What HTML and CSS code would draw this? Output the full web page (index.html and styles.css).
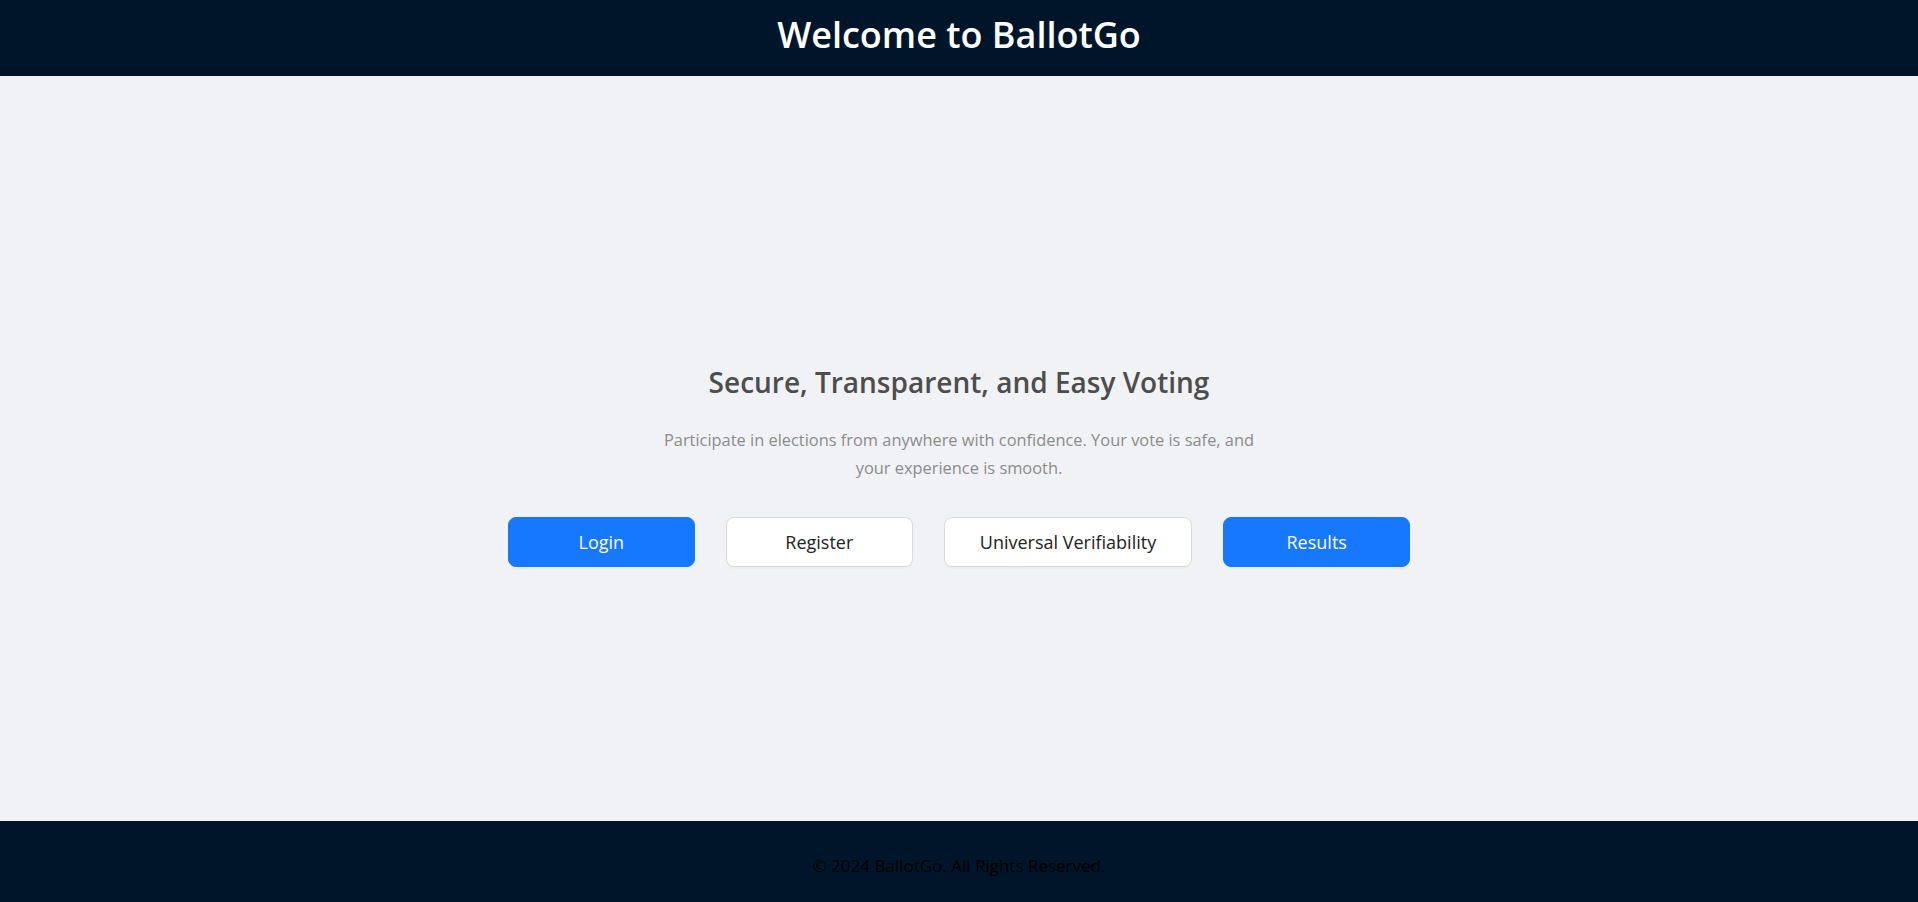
FILE: index.html
```html
<!DOCTYPE html>
<html lang="en">
<head>
<meta charset="utf-8">
<title>BallotGo</title>
<link rel="stylesheet" href="styles.css">
</head>
<body>
<div class="layout">
  <header class="header">
    <h1 class="header-title">Welcome to BallotGo</h1>
  </header>
  <main class="content">
    <div class="hero">
      <h2 class="hero-title">Secure, Transparent, and Easy Voting</h2>
      <p class="hero-text">Participate in elections from anywhere with confidence. Your vote is safe, and your experience is smooth.</p>
      <div class="actions">
        <button class="btn btn-primary">Login</button>
        <button class="btn btn-default">Register</button>
        <button class="btn btn-default">Universal Verifiability</button>
        <button class="btn btn-primary">Results</button>
      </div>
    </div>
  </main>
  <footer class="footer">© 2024 BallotGo. All Rights Reserved.</footer>
</div>
</body>
</html>
```

FILE: styles.css
```css
* { box-sizing: border-box; }
html, body { margin: 0; padding: 0; height: 100%; }
body {
  font-family: "Open Sans", "Noto Sans", sans-serif;
  background: #f0f2f5;
}
.layout {
  display: flex;
  flex-direction: column;
  min-height: 100vh;
}
.header {
  height: 76px;
  padding-bottom: 7px;
  background: #001529;
  display: flex;
  align-items: center;
  justify-content: center;
}
.header-title {
  margin: 0;
  color: #fff;
  font-size: 36px;
  font-weight: 600;
  line-height: 1;
}
.content {
  flex: 1;
  display: flex;
  align-items: center;
  justify-content: center;
  padding-top: 32px;
}
.hero {
  display: flex;
  flex-direction: column;
  align-items: center;
  text-align: center;
}
.hero-title {
  margin: 0 0 25px;
  font-size: 28px;
  font-weight: 600;
  color: #4d4d4d;
}
.hero-text {
  margin: 0 0 35px;
  max-width: 620px;
  font-size: 16.4px;
  line-height: 28px;
  color: #8c8c8c;
}
.actions {
  display: flex;
  gap: 31px;
}
.btn {
  min-width: 187px;
  height: 50px;
  padding: 0 35px;
  border-radius: 8px;
  font-family: inherit;
  font-size: 18px;
  cursor: pointer;
  box-shadow: 0 2px 0 rgba(0,0,0,0.02);
}
.btn-primary {
  background: #1677ff;
  color: #fff;
  border: 1px solid #1677ff;
}
.btn-default {
  background: #fff;
  color: #222;
  border: 1px solid #d9d9d9;
}
.footer {
  height: 81px;
  padding-top: 8px;
  background: #001529;
  color: #000;
  font-size: 17px;
  display: flex;
  align-items: center;
  justify-content: center;
}
```
